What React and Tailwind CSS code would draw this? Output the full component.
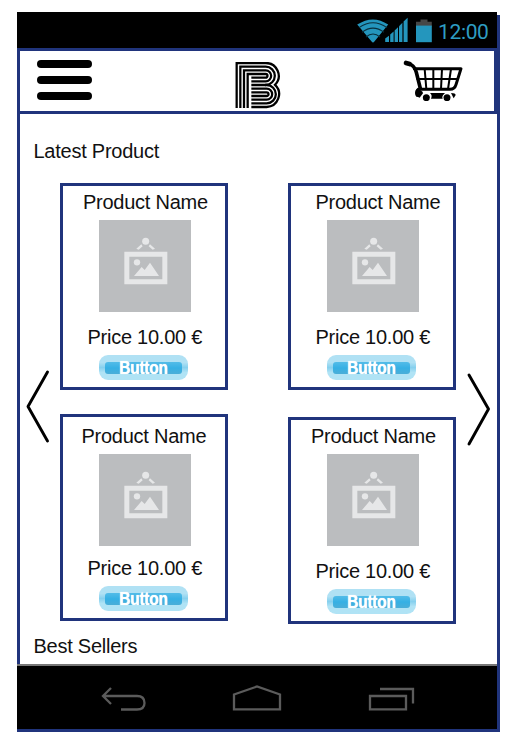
import React from "react";

const SANS = "font-['Liberation_Sans',Arial,sans-serif]";

function StatusIcons() {
  return (
    <svg className="block h-9 w-[80px]" viewBox="0 0 80 36">
      {/* wifi */}
      <path d="M0.2 12.6 Q16 2.2 31.2 12.6 L17.4 29.5 Q16 31.4 14.6 29.5 Z" fill="#2496bd" />
      <g fill="none" stroke="#0a2f3c" strokeWidth="1.1">
        <path d="M2 15.6 Q16 6 30 15.6" />
        <path d="M5 20.2 Q16 12 27 20.2" />
        <path d="M9 25 Q16 19 23 25" />
      </g>
      {/* signal */}
      <g fill="#2496bd">
        <path d="M28.2 30 V26.5 L32 23.8 V30 Z" />
        <path d="M33.2 30 V22.5 L36.6 19.5 V30 Z" />
        <path d="M37.6 30 V18.4 L41 15.2 V30 Z" />
        <path d="M42 30 V14.2 L45.4 10.8 V30 Z" />
        <path d="M46.6 30 V9.6 L50.6 5.8 V30 Z" />
      </g>
      {/* battery */}
      <path d="M59 14.5 V9.8 H63.5 V7.6 H70.5 V9.8 H74.8 V14.5 Z" fill="#474747" />
      <rect x="59" y="13.6" width="15.8" height="16.6" fill="#2496bd" />
    </svg>
  );
}

function Logo() {
  return (
    <svg className="block h-[48px] w-[48px]" viewBox="-2 0 144 144" fill="none" stroke="#000" strokeWidth="6.8">
      {/* outer contour with the waist notch */}
      <path d="M3 138 V3 H90 A38.5 38.5 0 0 1 118 68.5 A38.5 38.5 0 0 1 93 135 H47" />
      {/* upper bowl */}
      <path d="M14 138 V14 H90 A27.5 27.5 0 0 1 90 69 H47" />
      <path d="M25 138 V25 H90 A16.5 16.5 0 0 1 90 58 H47" />
      <path d="M36 138 V36 H90 A5.5 5.5 0 0 1 90 47 H47" />
      {/* lower bowl */}
      <path d="M88 69 H93 A27.5 27.5 0 0 1 93 124 H47" />
      <path d="M47 80 H93 A16.5 16.5 0 0 1 93 113 H47" />
      <path d="M47 91 H93 A5.5 5.5 0 0 1 93 102 H47" />
    </svg>
  );
}

function Cart() {
  return (
    <svg className="block h-[42px] w-[60px]" viewBox="0 0 180 126">
      <g fill="none" stroke="#000" strokeLinecap="round" strokeLinejoin="round">
        <path d="M9 12 L20 15" strokeWidth="14" />
        <path d="M18 15 Q35 19 40 40 L52 88 Q39 94 43 108" strokeWidth="11" />
        <path d="M34 29 H174 L159 77 Q155 91 141 91 H51" strokeWidth="9" />
        <path d="M43 60 H164" strokeWidth="6" />
        <path d="M65 30 L70 90 M91 30 V90 M117 30 L114 90 M144 30 L135 90" strokeWidth="6" />
      </g>
      <path d="M41 90 Q33 100 40 112 L50 116 L60 103 Q61 98 52 94 Z" />
      <path d="M81 102 H126 L120 109 Q116 115 119 119 H84 Q89 109 81 102 Z" />
      <path d="M144 102 Q158 102 158 108 L152 118 Z" />
      <circle cx="70" cy="116" r="10.5" />
      <circle cx="132" cy="116" r="10.5" />
    </svg>
  );
}

function Placeholder() {
  return (
    <div className="mt-1.5 h-[92px] w-[92px] bg-[#bbbdbf]">
      <svg className="block h-full w-full" viewBox="0 0 276 276">
        <g fill="#e6e7e8">
          <circle cx="140" cy="64" r="10.5" />
          <path d="M127 73 L131 79 L119 89 L112 86 Z M153 73 L149 79 L161 89 L168 86 Z" />
          <path d="M76 95 H205 V193 H76 Z M91 110 V178 H190 V110 Z" fillRule="evenodd" />
          <circle cx="114" cy="127" r="9.5" />
          <path d="M105 168 L128 141 L137 150 L153 128 L180 168 Z" />
        </g>
      </svg>
    </div>
  );
}

function GlossyButton() {
  return (
    <button className="mt-1.5 flex h-[25px] w-[89px] items-center rounded-[9px] bg-linear-to-b from-[#b0e1f4] from-30% via-[#86d0ee] via-50% to-[#b0e3f5] to-70% px-1.5">
      <span className="flex h-[12px] w-full items-center justify-center rounded-[3px] bg-linear-to-b from-[#52bce8] via-[#35b0e4] to-[#4aaed8]">
        <span className="inline-block origin-center scale-x-[0.88] pt-px font-['Liberation_Sans',Arial,sans-serif] text-[17.5px] leading-[25px] font-bold text-white [text-shadow:0_0_1px_#fff]">
          Button
        </span>
      </span>
    </button>
  );
}

function ProductCard({ className = "", nameClass = "", priceClass = "mt-[13px]" }) {
  return (
    <article className={`h-[207px] w-[168px] border-[3px] border-[#20347c] pl-9 ${className}`}>
      <h3 className={`h-6 w-[130px] whitespace-nowrap ${nameClass}`}>Product Name</h3>
      <Placeholder />
      <p className={`-ml-[11.5px] h-6 whitespace-nowrap ${priceClass}`}>Price 10.00 €</p>
      <GlossyButton />
    </article>
  );
}

function Arrow({ right = false }) {
  return (
    <svg
      className="block h-[76px] w-6 shrink-0"
      viewBox="0 0 24 76"
      fill="none"
      stroke="#000"
      strokeWidth="2.9"
      strokeLinecap="round"
      strokeLinejoin="round"
    >
      <path d={right ? "M2 4 L21.5 38 L2 73" : "M21.5 3 L2 37.5 L21.5 72"} />
    </svg>
  );
}

export default function App() {
  return (
    <div className={`h-[745px] w-[515px] overflow-hidden bg-white pt-3 pl-[17px] text-[20px] leading-6 tracking-[-0.25px] text-[#111] ${SANS}`}>
      <div className="flex h-[720px] w-[483px] bg-white">
        <div className="flex h-[720px] w-[480px] flex-col">
          <div className="flex h-9 shrink-0 items-center bg-black pl-[340px]">
            <StatusIcons />
            <span className="ml-[1px] pt-[3px] font-['Roboto',sans-serif] text-[21px] tracking-[-0.35px] text-[#2e9dc2]">12:00</span>
          </div>

          <header className="flex h-[66px] shrink-0 border-[3px] border-[#20347c]">
            <div className="mt-[9px] ml-[17px] flex h-[40px] w-[55px] flex-col justify-between">
              <span className="h-2 rounded-full bg-black" />
              <span className="h-2 rounded-full bg-black" />
              <span className="h-2 rounded-full bg-black" />
            </div>
            <div className="mt-[11px] ml-[143px]">
              <Logo />
            </div>
            <div className="mt-[8px] ml-[120px]">
              <Cart />
            </div>
          </header>

          <main className="flex h-[550px] shrink-0 flex-col border-l-[3px] border-[#20347c]">
            <h2 className="mt-[25px] ml-[13.5px] h-6">Latest Product</h2>
            <section className="mt-5 flex h-[441px] pl-[6px]">
              <div className="mt-[186px]">
                <Arrow />
              </div>
              <div className="ml-[10px] flex flex-col gap-6">
                <ProductCard nameClass="mt-1 -ml-[16px]" />
                <ProductCard nameClass="mt-[7px] -ml-[17.5px]" priceClass="mt-[10px]" />
              </div>
              <div className="ml-[60px] flex flex-col gap-[27px]">
                <ProductCard nameClass="mt-1 -ml-[11.5px]" />
                <ProductCard nameClass="mt-1 -ml-[16px]" />
              </div>
              <div className="mt-[188px] ml-[11px]">
                <Arrow right />
              </div>
            </section>
            <h2 className="mt-[10px] ml-[13.5px] h-6">Best Sellers</h2>
          </main>

          <nav className="flex h-[65px] shrink-0 border-t-2 border-[#777] bg-black">
            <svg className="block h-[63px] w-[480px]" viewBox="17 666 480 63" fill="none" stroke="#5b5b5b" strokeWidth="2.3">
              <path d="M111 688 L103 696 L111 704 M103 696 H137 Q144.5 696 144.5 703 Q144.5 709.5 137 709.5 H121" />
              <path d="M234 709.3 V694.5 L257 686.5 L280 694.5 V709.3 Z" />
              <path d="M370 696 H406 V709.3 H370 Z" />
              <path d="M380 689 H413 V703.5" />
            </svg>
          </nav>
          <div className="h-[3px] shrink-0 bg-[#20347c]" />
        </div>
        <div className="mt-[3px] w-[3px] bg-[#20347c]" />
      </div>
    </div>
  );
}
